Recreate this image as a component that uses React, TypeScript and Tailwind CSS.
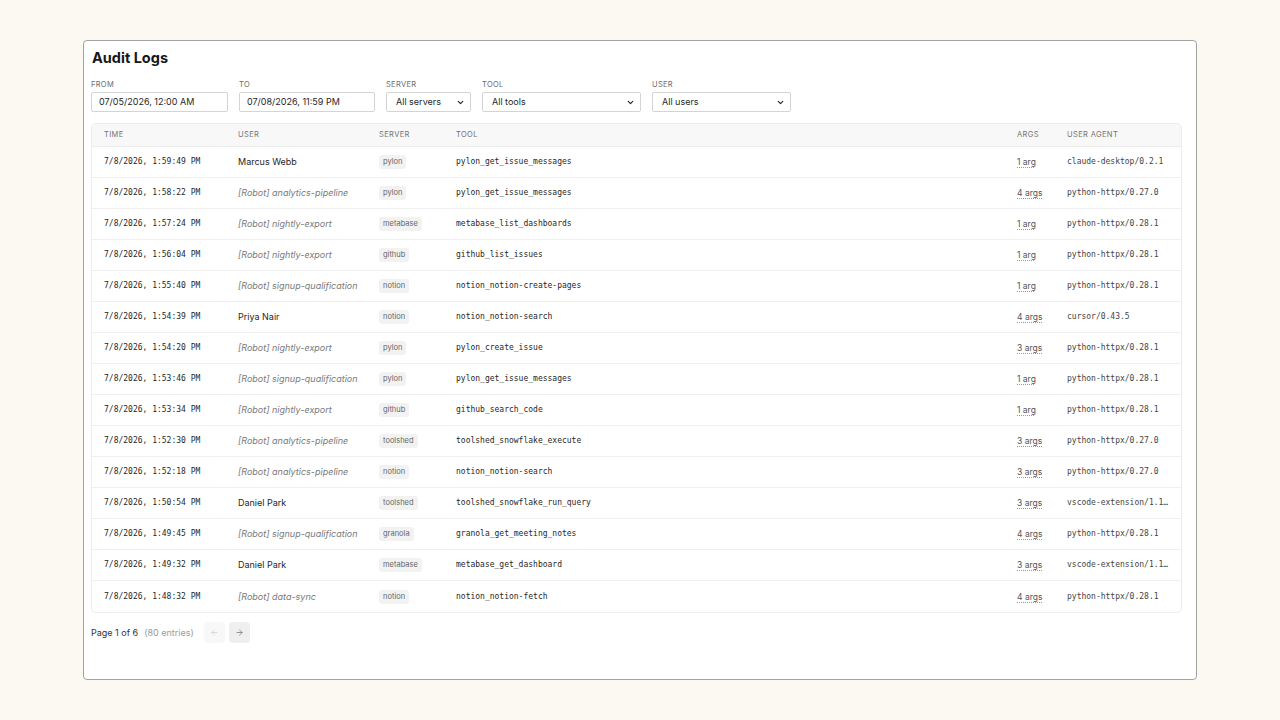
import { ChevronDown, ArrowLeft, ArrowRight } from "lucide-react";

const logs = [
  { time: "7/8/2026, 1:59:49 PM", user: "Marcus Webb", robot: false, server: "pylon", tool: "pylon_get_issue_messages", args: "1 arg", agent: "claude-desktop/0.2.1" },
  { time: "7/8/2026, 1:58:22 PM", user: "[Robot] analytics-pipeline", robot: true, server: "pylon", tool: "pylon_get_issue_messages", args: "4 args", agent: "python-httpx/0.27.0" },
  { time: "7/8/2026, 1:57:24 PM", user: "[Robot] nightly-export", robot: true, server: "metabase", tool: "metabase_list_dashboards", args: "1 arg", agent: "python-httpx/0.28.1" },
  { time: "7/8/2026, 1:56:04 PM", user: "[Robot] nightly-export", robot: true, server: "github", tool: "github_list_issues", args: "1 arg", agent: "python-httpx/0.28.1" },
  { time: "7/8/2026, 1:55:40 PM", user: "[Robot] signup-qualification", robot: true, server: "notion", tool: "notion_notion-create-pages", args: "1 arg", agent: "python-httpx/0.28.1" },
  { time: "7/8/2026, 1:54:39 PM", user: "Priya Nair", robot: false, server: "notion", tool: "notion_notion-search", args: "4 args", agent: "cursor/0.43.5" },
  { time: "7/8/2026, 1:54:20 PM", user: "[Robot] nightly-export", robot: true, server: "pylon", tool: "pylon_create_issue", args: "3 args", agent: "python-httpx/0.28.1" },
  { time: "7/8/2026, 1:53:46 PM", user: "[Robot] signup-qualification", robot: true, server: "pylon", tool: "pylon_get_issue_messages", args: "1 arg", agent: "python-httpx/0.28.1" },
  { time: "7/8/2026, 1:53:34 PM", user: "[Robot] nightly-export", robot: true, server: "github", tool: "github_search_code", args: "1 arg", agent: "python-httpx/0.28.1" },
  { time: "7/8/2026, 1:52:30 PM", user: "[Robot] analytics-pipeline", robot: true, server: "toolshed", tool: "toolshed_snowflake_execute", args: "3 args", agent: "python-httpx/0.27.0" },
  { time: "7/8/2026, 1:52:18 PM", user: "[Robot] analytics-pipeline", robot: true, server: "notion", tool: "notion_notion-search", args: "3 args", agent: "python-httpx/0.27.0" },
  { time: "7/8/2026, 1:50:54 PM", user: "Daniel Park", robot: false, server: "toolshed", tool: "toolshed_snowflake_run_query", args: "3 args", agent: "vscode-extension/1.12.0" },
  { time: "7/8/2026, 1:49:45 PM", user: "[Robot] signup-qualification", robot: true, server: "granola", tool: "granola_get_meeting_notes", args: "4 args", agent: "python-httpx/0.28.1" },
  { time: "7/8/2026, 1:49:32 PM", user: "Daniel Park", robot: false, server: "metabase", tool: "metabase_get_dashboard", args: "3 args", agent: "vscode-extension/1.12.0" },
  { time: "7/8/2026, 1:48:32 PM", user: "[Robot] data-sync", robot: true, server: "notion", tool: "notion_notion-fetch", args: "4 args", agent: "python-httpx/0.28.1" },
];

const cols = "grid grid-cols-[134px_141px_77px_561px_50px_128px]";
const cell = "flex items-center pl-[12px] min-w-0 leading-[12px]";
const mono = "font-['DejaVu_Sans_Mono',monospace]";

function Field({ label, width, children }: { label: string; width: string; children: React.ReactNode }) {
  return (
    <div className={`flex flex-col gap-[2px] ${width}`}>
      <span className="text-[7.5px] leading-[10px] uppercase tracking-[0.04em] text-[#6b6b6b]">{label}</span>
      {children}
    </div>
  );
}

function Select({ value }: { value: string }) {
  return (
    <div className="h-[20px] flex items-center justify-between border border-[#d4d4d4] rounded-[2px] bg-white pl-[9px] pr-[5px] text-[9px] text-[#1f1f1f]">
      <span>{value}</span>
      <ChevronDown className="w-[9px] h-[9px]" strokeWidth={3} />
    </div>
  );
}

export default function App() {
  return (
    <div className="min-h-screen bg-[#fcf8f2] pt-[40px] pl-[83px] font-['Inter',sans-serif]">
      <div className="w-[1114px] h-[640px] bg-white border-[1.5px] border-[#a3a3a3] rounded-[4px] pl-[7px] pt-[7px]">
        <h1 className="text-[14.5px] font-bold text-[#171717] leading-[20px] pl-[1px]">Audit Logs</h1>

        <div className="flex gap-[11px] mt-[12px]">
          <Field label="From" width="w-[137px]">
            <div className="h-[20px] flex items-center border border-[#d4d4d4] rounded-[2px] pl-[7px] text-[9px] text-[#1f1f1f]">07/05/2026, 12:00 AM</div>
          </Field>
          <Field label="To" width="w-[136px]">
            <div className="h-[20px] flex items-center border border-[#d4d4d4] rounded-[2px] pl-[7px] text-[9px] text-[#1f1f1f]">07/08/2026, 11:59 PM</div>
          </Field>
          <Field label="Server" width="w-[85px]">
            <Select value="All servers" />
          </Field>
          <Field label="Tool" width="w-[159px]">
            <Select value="All tools" />
          </Field>
          <Field label="User" width="w-[139px]">
            <Select value="All users" />
          </Field>
        </div>

        <div className="mt-[11px] w-[1091px] border border-[#ececec] rounded-[5px] overflow-hidden">
          <div className={`${cols} h-[23px] bg-[#f8f8f8] border-b border-[#ececec] text-[7.5px] uppercase tracking-[0.05em] text-[#737373]`}>
            <span className={cell}>Time</span>
            <span className={cell}>User</span>
            <span className={cell}>Server</span>
            <span className={cell}>Tool</span>
            <span className={cell}>Args</span>
            <span className={cell}>User Agent</span>
          </div>
          {logs.map((log, i) => (
            <div
              key={i}
              className={`${cols} h-[31px] ${i < logs.length - 1 ? "border-b border-[#efefef]" : ""}`}
            >
              <div className={`${cell} ${mono} text-[8px] text-[#1f1f1f]`}>{log.time}</div>
              <div className={`${cell} text-[9px] ${log.robot ? "italic text-[#7a7a7a]" : "text-[#1f1f1f]"}`}>{log.user}</div>
              <div className={cell}>
                <span className="bg-[#f2f2f2] rounded-[3px] px-[4px] py-[2px] text-[7.5px] text-[#666] leading-[10px]">{log.server}</span>
              </div>
              <div className={`${cell} ${mono} text-[8px] text-[#1f1f1f]`}>{log.tool}</div>
              <div className={cell}>
                <span className="text-[8.5px] text-[#555] underline decoration-dotted decoration-[#999] underline-offset-2">{log.args}</span>
              </div>
              <div className={`${cell} pr-[14px] ${mono} text-[8px] text-[#444]`}>
                <span className="truncate">{log.agent}</span>
              </div>
            </div>
          ))}
        </div>

        <div className="flex items-center mt-[9px] text-[9px]">
          <span className="text-[#333]">Page 1 of 6</span>
          <span className="ml-[6px] text-[#9a9a9a]">(80 entries)</span>
          <div className="flex gap-[4px] ml-[10px]">
            <button className="w-[21px] h-[21px] rounded-[4px] bg-[#f8f8f8] flex items-center justify-center">
              <ArrowLeft className="w-[9px] h-[9px] text-[#d0d0d0]" />
            </button>
            <button className="w-[21px] h-[21px] rounded-[4px] bg-[#efefef] flex items-center justify-center">
              <ArrowRight className="w-[9px] h-[9px] text-[#777]" />
            </button>
          </div>
        </div>
      </div>
    </div>
  );
}
